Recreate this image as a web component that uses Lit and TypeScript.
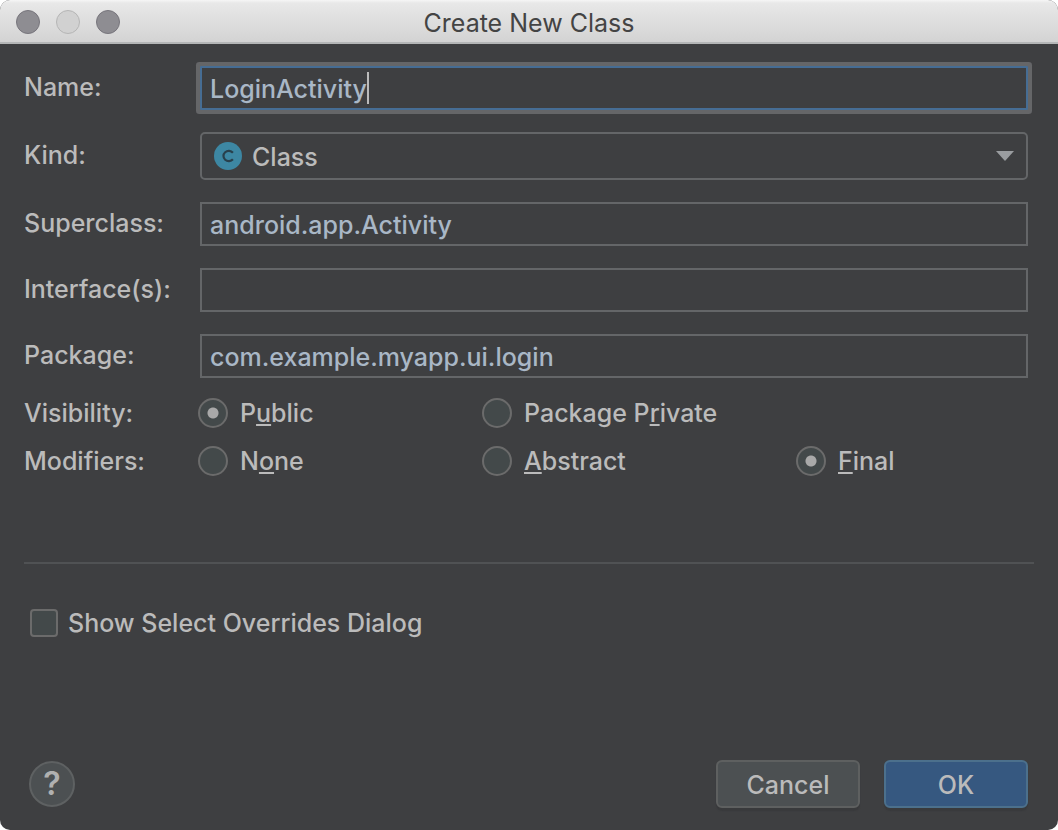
import { LitElement, html, css, svg } from "lit";
import { customElement, state } from "lit/decorators.js";

interface Choice {
  value: string;
  before: string;
  key: string;
  after: string;
}

const VISIBILITY: Choice[] = [
  { value: "public", before: "P", key: "u", after: "blic" },
  { value: "package", before: "Package P", key: "r", after: "ivate" },
];

const MODIFIERS: Choice[] = [
  { value: "none", before: "N", key: "o", after: "ne" },
  { value: "abstract", before: "", key: "A", after: "bstract" },
  { value: "final", before: "", key: "F", after: "inal" },
];

@customElement("app-root")
export class AppRoot extends LitElement {
  @state() private visibility = "public";
  @state() private modifier = "final";

  static styles = css`
    :host {
      display: block;
      background: #ffffff;
      font-family: Inter, "Liberation Sans", sans-serif;
      font-size: 25px;
      font-weight: 500;
      line-height: 30px;
      color: #bbbbbb;
    }
    * {
      box-sizing: border-box;
    }
    input,
    select,
    button {
      font: inherit;
      color: inherit;
      margin: 0;
    }
    .window {
      display: flex;
      flex-direction: column;
      min-height: 100vh;
      background: #3e3f41;
      border-radius: 10px;
      overflow: hidden;
    }
    .titlebar {
      display: grid;
      grid-template-columns: 1fr auto 1fr;
      align-items: center;
      height: 44px;
      padding: 2px 16px 0;
      background: linear-gradient(#f6f6f6, #e8e8e8 3px, #d3d3d3);
      border-bottom: 2px solid #b4b6b7;
    }
    .title {
      margin: 0;
      padding-top: 2px;
      font-size: 25px;
      font-weight: 400;
      color: #444444;
    }
    .lights {
      display: flex;
      gap: 16px;
    }
    .light {
      width: 24px;
      height: 24px;
      padding: 0;
      border: 1px solid #77757c;
      border-radius: 50%;
      background: #8e8d92;
    }
    .light:disabled {
      border-color: #b5b5b5;
      background: #d1d1d1;
    }
    .body {
      flex: 1;
      display: flex;
      flex-direction: column;
      padding: 22px 24px;
    }
    .form {
      display: grid;
      grid-template-columns: 176px 1fr;
      row-gap: 22px;
      align-items: center;
      padding-right: 6px;
    }
    .label {
      padding-bottom: 2px;
    }
    .field {
      width: 100%;
      height: 44px;
      padding: 2px 8px 0;
      border: 2px solid #646668;
      border-radius: 0;
      background: #3e3f41;
      color: #a9b7c6;
      outline: none;
    }
    .focused {
      display: flex;
      align-items: center;
      border-color: #466d94;
      padding-top: 0;
      border-radius: 1px;
      box-shadow: 0 0 0 4px #656668;
    }
    .bare {
      field-sizing: content;
      min-width: 0;
      padding: 2px 0 0;
      border: 0;
      background: none;
      color: inherit;
      outline: none;
      caret-color: transparent;
    }
    .caret {
      width: 2px;
      height: 32px;
      background: #bbbbbb;
    }
    .combo {
      display: grid;
      align-items: center;
      height: 48px;
    }
    .combo > * {
      grid-area: 1 / 1;
    }
    .select {
      appearance: none;
      width: 100%;
      height: 48px;
      padding: 2px 40px 0 50px;
      border: 2px solid #646668;
      border-radius: 5px;
      background: #3e3f41;
      outline: none;
    }
    .kind-icon {
      margin-left: 14px;
      pointer-events: none;
    }
    .arrow {
      justify-self: end;
      margin-right: 14px;
      pointer-events: none;
    }
    .choices {
      display: grid;
      grid-template-columns: 174px 284fr 314fr 238fr;
      row-gap: 18px;
      align-items: center;
      margin-top: 20px;
    }
    .group {
      display: contents;
    }
    .choice {
      display: flex;
      align-items: center;
      gap: 12px;
      white-space: nowrap;
    }
    .radio {
      appearance: none;
      flex: none;
      width: 30px;
      height: 30px;
      border: 2px solid #6b6b6b;
      border-radius: 50%;
      background: #43494a;
    }
    .radio:checked {
      background: radial-gradient(circle, #a9a9a9 5px, #43494a 6px);
    }
    .key {
      text-decoration: underline 2px;
      text-underline-offset: 2px;
      text-decoration-skip-ink: none;
    }
    .rule {
      width: 100%;
      height: 2px;
      margin: 86px 0 44px;
      border: 0;
      background: #505254;
    }
    .option {
      display: flex;
      align-items: center;
      gap: 10px;
      padding-left: 6px;
    }
    .check {
      appearance: none;
      width: 28px;
      height: 28px;
      border: 2px solid #6b6b6b;
      border-radius: 4px;
      background: #43494a;
    }
    .check:checked {
      background: #a9a9a9;
    }
    .footer {
      display: flex;
      align-items: center;
      gap: 24px;
      margin-top: auto;
      padding: 0 6px 0 5px;
    }
    .help {
      display: grid;
      place-items: center;
      width: 46px;
      height: 46px;
      margin-right: auto;
      padding: 0;
      border: 2px solid #5e6162;
      border-radius: 50%;
      background: #4c5052;
      font-weight: 600;
      font-size: 32px;
      color: #b0b0b0;
    }
    .button {
      width: 144px;
      height: 48px;
      padding: 2px 0 0;
      border: 2px solid #5e6060;
      border-radius: 6px;
      background: #4c5052;
      box-shadow: 0 3px 1px #393a3c;
    }
    .primary {
      border-color: #4c708c;
      background: #365880;
    }
  `;

  private choice(group: string, item: Choice, selected: string, pick: (v: string) => void) {
    return html`<label class="choice">
      <input
        class="radio"
        type="radio"
        name=${group}
        .value=${item.value}
        .checked=${item.value === selected}
        @change=${() => pick(item.value)}
      />
      <span>${item.before}<span class="key">${item.key}</span>${item.after}</span>
    </label>`;
  }

  render() {
    return html`
      <main class="window">
        <header class="titlebar">
          <div class="lights">
            <button class="light" aria-label="Close"></button>
            <button class="light" aria-label="Minimize" disabled></button>
            <button class="light" aria-label="Zoom"></button>
          </div>
          <h1 class="title">Create New Class</h1>
        </header>
        <div class="body">
          <div class="form">
            <label class="label" for="name">Name:</label>
            <label class="field focused">
              <input class="bare" id="name" type="text" value="LoginActivity" spellcheck="false" />
              <span class="caret"></span>
            </label>

            <label class="label" for="kind">Kind:</label>
            <div class="combo">
              <select class="select" id="kind">
                <option>Class</option>
              </select>
              <svg class="kind-icon" width="28" height="28" viewBox="0 0 28 28" aria-hidden="true">
                ${svg`<circle cx="14" cy="14" r="14" fill="#3d87a3" />
                <path d="M18.9 10.8 A5.3 5.1 0 1 0 18.9 17.2" fill="none" stroke="#28404c" stroke-width="2.2" />`}
              </svg>
              <svg class="arrow" width="18" height="10" viewBox="0 0 18 10" aria-hidden="true">
                ${svg`<path d="M0 0H18L9 10Z" fill="#9a9da0" />`}
              </svg>
            </div>

            <label class="label" for="superclass">Superclass:</label>
            <input class="field" id="superclass" type="text" value="android.app.Activity" spellcheck="false" />

            <label class="label" for="interfaces">Interface(s):</label>
            <input class="field" id="interfaces" type="text" spellcheck="false" />

            <label class="label" for="package">Package:</label>
            <input class="field" id="package" type="text" value="com.example.myapp.ui.login" spellcheck="false" />
          </div>

          <div class="choices">
            <div class="group" role="radiogroup" aria-labelledby="visibility">
              <span id="visibility">Visibility:</span>
              ${VISIBILITY.map((c) => this.choice("visibility", c, this.visibility, (v) => (this.visibility = v)))}
              <span></span>
            </div>
            <div class="group" role="radiogroup" aria-labelledby="modifiers">
              <span id="modifiers">Modifiers:</span>
              ${MODIFIERS.map((c) => this.choice("modifier", c, this.modifier, (v) => (this.modifier = v)))}
            </div>
          </div>

          <hr class="rule" />

          <label class="option">
            <input class="check" type="checkbox" />
            <span>Show Select Overrides Dialog</span>
          </label>

          <footer class="footer">
            <button class="help" aria-label="Help">?</button>
            <button class="button">Cancel</button>
            <button class="button primary">OK</button>
          </footer>
        </div>
      </main>
    `;
  }
}
